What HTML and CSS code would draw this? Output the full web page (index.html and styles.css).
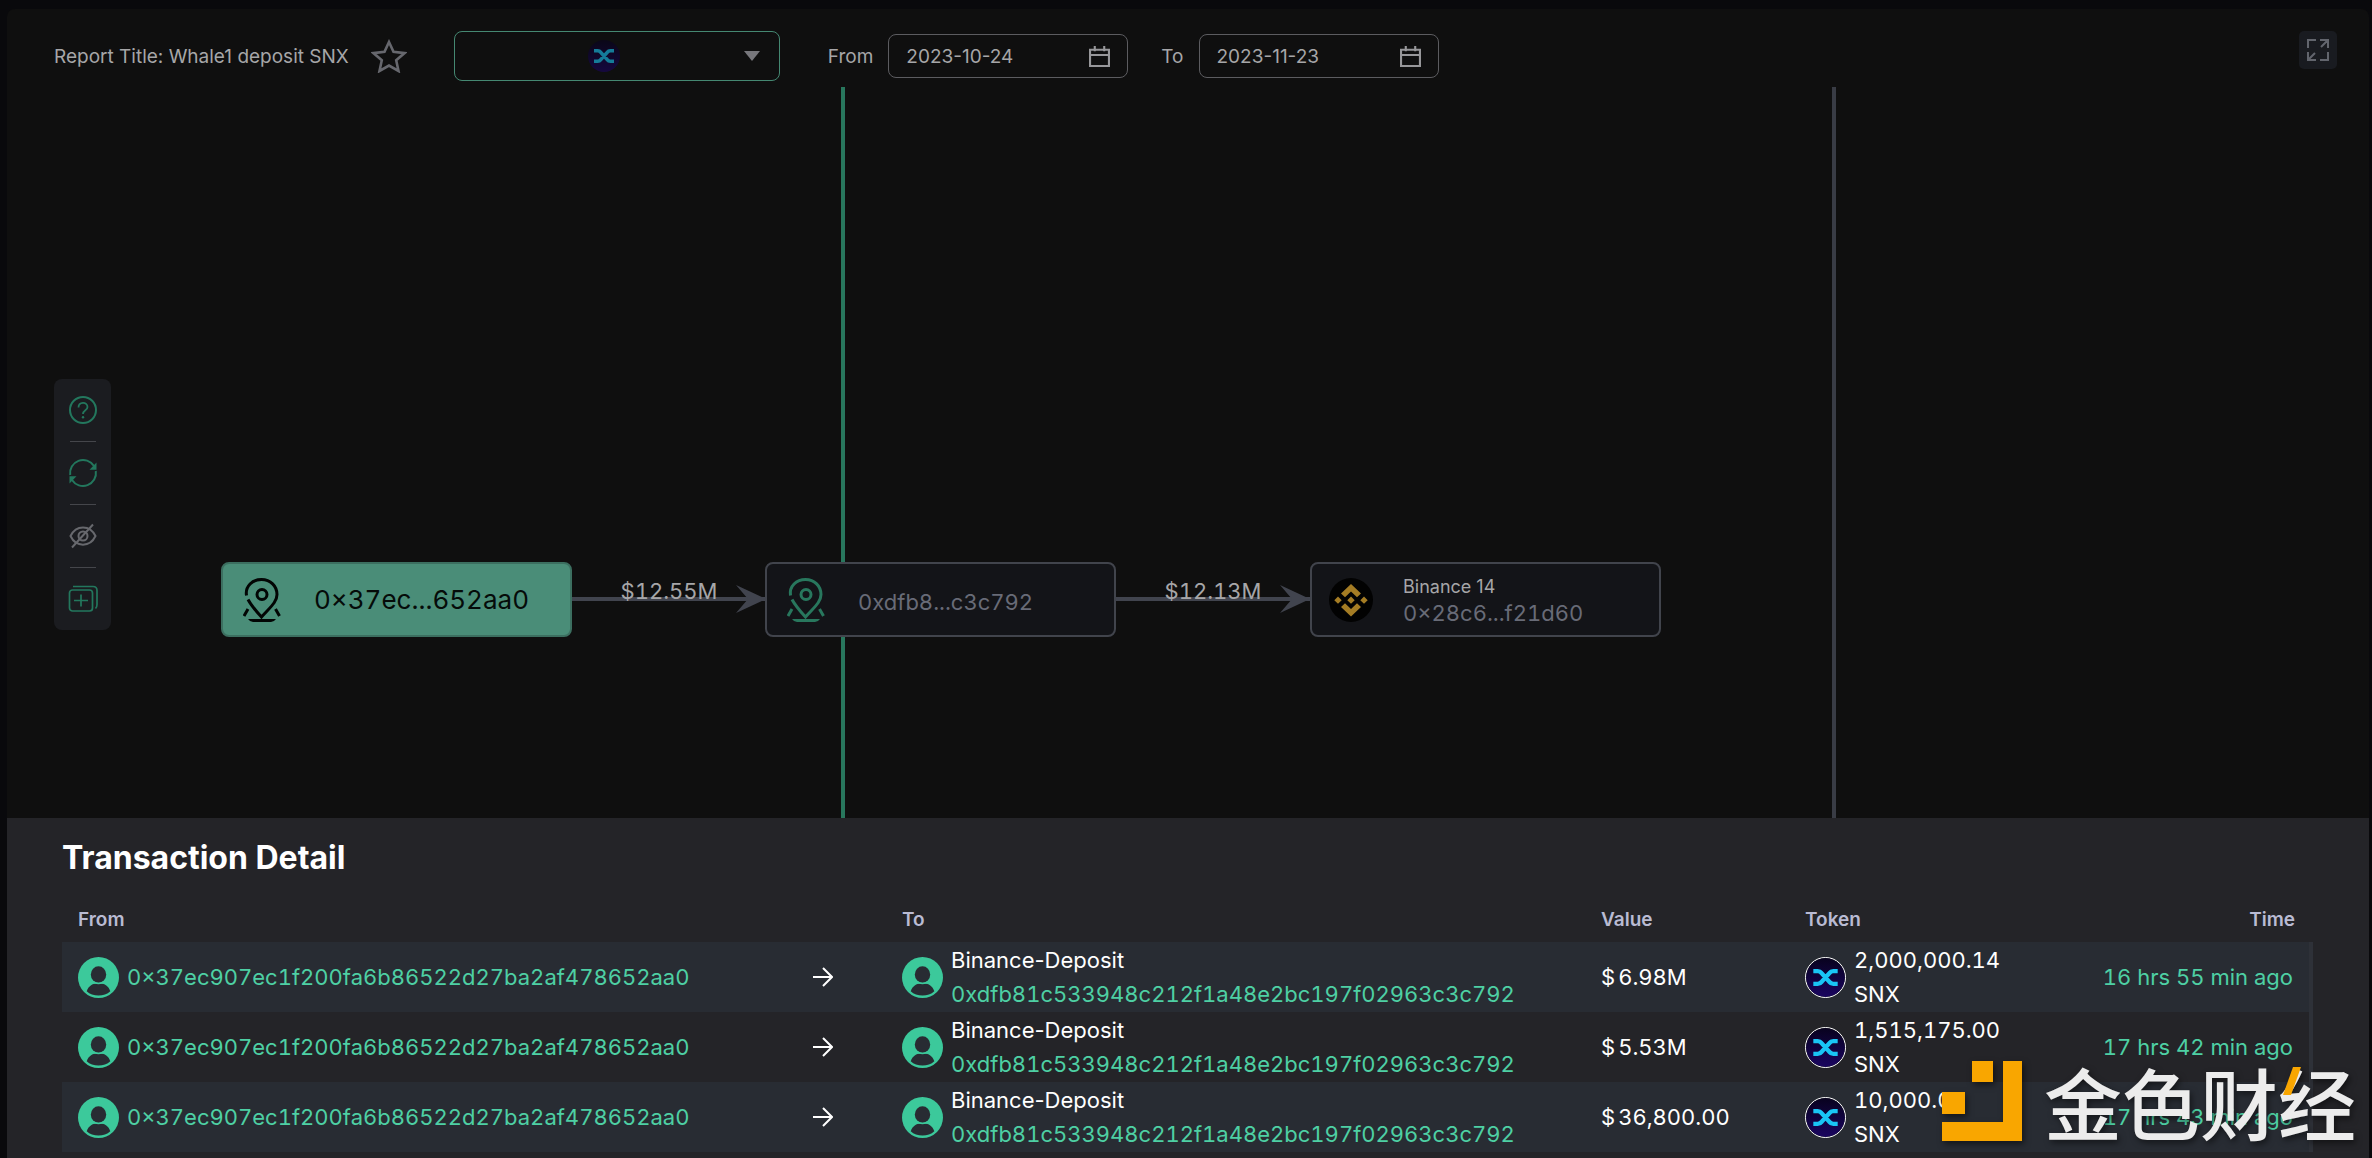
FILE: index.html
```html
<!DOCTYPE html>
<html lang="en">
<head>
<meta charset="utf-8">
<meta name="viewport" content="width=device-width, initial-scale=1">
<title>Whale1 deposit SNX</title>
<link rel="stylesheet" href="styles.css">
</head>
<body>
<svg class="defs" aria-hidden="true">
  <defs>
    <linearGradient id="snx-bg" x1="0" y1="0" x2="0" y2="1">
      <stop offset="0" stop-color="#08021e"/><stop offset="1" stop-color="#1a0560"/>
    </linearGradient>
    <symbol id="snx" viewBox="0 0 40 40">
      <circle cx="20" cy="20" r="20" fill="url(#snx-bg)"/>
      <path d="M7.500 13.500h4.500q2.500 0 4 2l8 9q1.500 2 4 2h4.500M32.500 13.500h-4.500q-2.500 0-4 2l-8 9q-1.500 2-4 2H7.500" fill="none" stroke="currentColor" stroke-width="4.500"/>
    </symbol>
    <symbol id="user" viewBox="0 0 40 40">
      <circle cx="20" cy="20" r="20" fill="#3cc99b"/>
      <ellipse cx="20" cy="17" rx="7.500" ry="8" fill="#282c33"/>
      <path d="M8.500 33.500C10 28 14.500 25.500 20 25.500S30 28 31.500 33.500C28.500 36.500 24.500 37.500 20 37.500S11.500 36.500 8.500 33.500Z" fill="#282c33"/>
      <path d="M13 24.500q7 2.600 14 0" fill="none" stroke="#3cc99b" stroke-width="1.500"/>
    </symbol>
    <symbol id="arrow" viewBox="0 0 20 20">
      <path d="M0 10h19M10 1l9 9-9 9" fill="none" stroke="currentColor" stroke-width="2"/>
    </symbol>
    <symbol id="calendar" viewBox="0 0 20 20">
      <path d="M1 3.500h18V19H1ZM1 8.500h18M5.500 0v5M14.500 0v5" fill="none" stroke="currentColor" stroke-width="2"/>
    </symbol>
    <symbol id="pin" viewBox="0 0 38 44">
      <g fill="none" stroke="currentColor" stroke-width="3">
        <path d="M3.500 17.500C2 8 9.500 1.500 18.500 1.500S34 8 34 16.500C34 24 27.500 29 18.500 39C12.500 32.500 8 27 5 21.500"/>
        <circle cx="19" cy="16.500" r="5"/>
        <path d="M5 31l-4 7M32.500 31l4 7"/>
      </g>
      <path d="M5 41h28q-2 3-5 3H10q-3 0-5-3Z" fill="currentColor"/>
    </symbol>
  </defs>
</svg>

<main class="report">
  <header class="toolbar">
    <h1 class="report-title">Report Title: Whale1 deposit SNX</h1>
    <button class="icon-button star" aria-label="Add to favourites">
      <svg viewBox="0 0 36 34"><path d="M18 3l4.500 9.800 11 1.300-8.300 7.200 2.300 10.700L18 26.500 8.500 32l2.300-10.700L2.500 14.100l11-1.300Z" fill="none" stroke="currentColor" stroke-width="2.600"/></svg>
    </button>
    <div class="token-select">
      <select aria-label="Token"><option>SNX</option></select>
      <svg class="token-icon" aria-hidden="true"><use href="#snx"/></svg>
      <svg class="caret" viewBox="0 0 16 10" aria-hidden="true"><path d="M0 0h16L8 10Z" fill="currentColor"/></svg>
    </div>
    <div class="date-field from">
      <label for="date-from">From</label>
      <div class="date-box"><input id="date-from" type="text" value="2023-10-24"><svg aria-hidden="true"><use href="#calendar"/></svg></div>
    </div>
    <div class="date-field to">
      <label for="date-to">To</label>
      <div class="date-box"><input id="date-to" type="text" value="2023-11-23"><svg aria-hidden="true"><use href="#calendar"/></svg></div>
    </div>
    <button class="icon-button expand" aria-label="Full screen">
      <svg viewBox="0 0 22 22"><path d="M1 9V1h8M13 1h8v8M21 1l-7 7M21 13v8h-8M9 21H1v-8M1 21l7-7" fill="none" stroke="currentColor" stroke-width="2"/></svg>
    </button>
  </header>

  <section class="canvas" aria-label="Fund flow">
    <div class="guide guide-active"></div>
    <div class="guide guide-idle"></div>

    <nav class="tools" aria-label="Canvas tools">
      <button class="icon-button" aria-label="Help">
        <svg viewBox="0 0 30 30" fill="none" stroke="currentColor"><circle cx="15" cy="15" r="13" stroke-width="2"/><path d="M10.500 12.500C10.500 6.500 19.500 6.500 19.500 12C19.500 15.500 15 15 15 19" stroke-width="1.800"/><circle cx="15" cy="22.300" r="1.200" fill="currentColor" stroke="none"/></svg>
      </button>
      <hr>
      <button class="icon-button" aria-label="Refresh">
        <svg viewBox="0 0 30 30" fill="none" stroke="currentColor" stroke-width="2"><path d="M2.200 17A13 13 0 0 1 26 8M27.800 13A13 13 0 0 1 4 22"/><path d="M28.500 4.500v7.200h-7Z M1.500 25.500v-7.200h7Z" fill="currentColor" stroke="none"/></svg>
      </button>
      <hr>
      <button class="icon-button muted" aria-label="Hide">
        <svg viewBox="0 0 30 30" fill="none" stroke="currentColor" stroke-width="2"><path d="M2.500 15C8 3.500 22 3.500 27.500 15C22 26.500 8 26.500 2.500 15ZM4 26.500L25 3.500"/><circle cx="15" cy="15" r="4.500"/></svg>
      </button>
      <hr>
      <button class="icon-button" aria-label="Add layer">
        <svg viewBox="0 0 30 30" fill="none" stroke="currentColor" stroke-width="1.700"><rect x="1.500" y="6" width="23" height="21" rx="3"/><path d="M13 10.500v12M6 16.500h14M5 2.500h20q4 0 4 4v14q0 2.500-1.500 4"/></svg>
      </button>
    </nav>

    <div class="edge edge-1"><span>$12.55M</span><svg viewBox="0 0 30 28"><path d="M0 0l30 14L0 28l12-14Z" fill="currentColor"/></svg></div>
    <div class="edge edge-2"><span>$12.13M</span><svg viewBox="0 0 30 28"><path d="M0 0l30 14L0 28l12-14Z" fill="currentColor"/></svg></div>

    <article class="node node-source">
      <svg class="pin" aria-hidden="true"><use href="#pin"/></svg>
      <p class="node-address">0×37ec...652aa0</p>
    </article>
    <article class="node node-deposit">
      <svg class="pin" aria-hidden="true"><use href="#pin"/></svg>
      <p class="node-address">0xdfb8...c3c792</p>
    </article>
    <article class="node node-exchange">
      <svg class="exchange-logo" viewBox="0 0 44 44" aria-hidden="true">
        <circle cx="22" cy="22" r="22" fill="#020202"/>
        <path d="M22 6l10 9.500-4 3.700-6-5.700-6 5.700-4-3.700ZM22 38.500l10-9.500-4-3.700-6 5.700-6-5.700-4 3.700ZM22 18.600l3.700 3.600-3.700 3.600-3.700-3.600ZM9 18.600l3.700 3.600L9 25.800l-3.700-3.600ZM35 18.600l3.700 3.600-3.700 3.600-3.700-3.600Z" fill="#a47c24"/>
      </svg>
      <div class="node-text">
        <h2 class="node-name">Binance 14</h2>
        <p class="node-address">0×28c6...f21d60</p>
      </div>
    </article>
  </section>

  <section class="detail">
    <h2 class="detail-title">Transaction Detail</h2>
    <div class="table-frame">
      <table>
        <colgroup><col class="col-from"><col class="col-arrow"><col><col class="col-value"><col class="col-token"><col class="col-time"></colgroup>
        <thead>
          <tr><th>From</th><th></th><th>To</th><th>Value</th><th>Token</th><th class="time">Time</th></tr>
        </thead>
        <tbody>
          <tr>
            <td><div class="party"><svg><use href="#user"/></svg><a href="#from-1">0×37ec907ec1f200fa6b86522d27ba2af478652aa0</a></div></td>
            <td><svg class="arrow"><use href="#arrow"/></svg></td>
            <td><div class="party"><svg><use href="#user"/></svg><div class="stack"><span class="label">Binance-Deposit</span><a href="#to-1">0xdfb81c533948c212f1a48e2bc197f02963c3c792</a></div></div></td>
            <td><div class="money"><span>$</span><span>6.98M</span></div></td>
            <td><div class="party token"><svg><use href="#snx"/></svg><div class="stack"><span>2,000,000.14</span><span>SNX</span></div></div></td>
            <td class="time"><a href="#tx-1">16 hrs 55 min ago</a></td>
          </tr>
          <tr>
            <td><div class="party"><svg><use href="#user"/></svg><a href="#from-2">0×37ec907ec1f200fa6b86522d27ba2af478652aa0</a></div></td>
            <td><svg class="arrow"><use href="#arrow"/></svg></td>
            <td><div class="party"><svg><use href="#user"/></svg><div class="stack"><span class="label">Binance-Deposit</span><a href="#to-2">0xdfb81c533948c212f1a48e2bc197f02963c3c792</a></div></div></td>
            <td><div class="money"><span>$</span><span>5.53M</span></div></td>
            <td><div class="party token"><svg><use href="#snx"/></svg><div class="stack"><span>1,515,175.00</span><span>SNX</span></div></div></td>
            <td class="time"><a href="#tx-2">17 hrs 42 min ago</a></td>
          </tr>
          <tr>
            <td><div class="party"><svg><use href="#user"/></svg><a href="#from-3">0×37ec907ec1f200fa6b86522d27ba2af478652aa0</a></div></td>
            <td><svg class="arrow"><use href="#arrow"/></svg></td>
            <td><div class="party"><svg><use href="#user"/></svg><div class="stack"><span class="label">Binance-Deposit</span><a href="#to-3">0xdfb81c533948c212f1a48e2bc197f02963c3c792</a></div></div></td>
            <td><div class="money"><span>$</span><span>36,800.00</span></div></td>
            <td><div class="party token"><svg><use href="#snx"/></svg><div class="stack"><span>10,000.00</span><span>SNX</span></div></div></td>
            <td class="time"><a href="#tx-3">17 hrs 43 min ago</a></td>
          </tr>
        </tbody>
      </table>
    </div>
  </section>
</main>

<aside class="watermark" lang="zh-CN">
  <svg class="mark" viewBox="0 0 80 80" aria-hidden="true"><path d="M61 0h19v80H0V61h61ZM30 0h21v21H30ZM0 31h23v22H0Z" fill="#f9a600"/></svg>
  <span>金色财经</span>
  <svg class="slash" viewBox="0 0 18 28" aria-hidden="true"><path d="M10 0h8L8 28H0Z" fill="#f9a600"/></svg>
</aside>
</body>
</html>
```
FILE: styles.css
```css
* { box-sizing: border-box; }

body {
  margin: 0;
  background: #09090c;
  color: #a6a6a8;
  font-family: Inter, "Liberation Sans", sans-serif;
  font-size: 22px;
  overflow: hidden;
}

h1, h2, p { margin: 0; font-weight: 400; }
a { color: #4ed0a4; text-decoration: none; }
svg { display: block; flex: none; }
.defs { position: absolute; width: 0; height: 0; }

.icon-button {
  display: flex;
  align-items: center;
  justify-content: center;
  padding: 0;
  border: 0;
  background: none;
  color: inherit;
}

.report {
  display: flex;
  flex-direction: column;
  min-height: 100vh;
  padding: 9px 3px 0 7px;
}

/* Toolbar */
.toolbar {
  display: flex;
  align-items: center;
  height: 78px;
  padding: 16px 32px 0 47px;
  background: #0f0f0f;
  border-radius: 8px 8px 0 0;
  font-size: 19px;
}
.toolbar > * { flex: none; }
.report-title { font-size: 19px; }
.star { margin-left: 22px; color: #66676d; }
.star svg { width: 36px; height: 34px; }
.token-select {
  position: relative;
  width: 326px;
  height: 50px;
  margin-left: 47px;
}
.token-select select {
  width: 100%;
  height: 100%;
  appearance: none;
  border: 1px solid #458872;
  border-radius: 8px;
  background: none;
  color: transparent;
}
.token-icon {
  position: absolute;
  left: 134px;
  top: 9px;
  width: 32px;
  height: 32px;
  color: #19c5f5;
  opacity: 0.6;
}
.caret {
  position: absolute;
  right: 20px;
  top: 20px;
  width: 16px;
  height: 10px;
  color: #77777c;
}
.date-field { display: flex; align-items: center; gap: 15px; }
.date-field.from { margin-left: 48px; }
.date-field.to { margin-left: 33px; }
.date-box {
  display: flex;
  align-items: center;
  width: 240px;
  height: 44px;
  padding: 0 17px;
  border: 1px solid #5c5c60;
  border-radius: 8px;
}
.date-box input {
  flex: 1;
  min-width: 0;
  padding: 0;
  border: 0;
  background: none;
  color: #a6a6a8;
  font: inherit;
}
.date-box svg { width: 21px; height: 21px; color: #97979a; }
.expand {
  width: 38px;
  height: 38px;
  margin: 0 0 12px auto;
  border-radius: 5px;
  background: #191b20;
  color: #62656d;
}
.expand svg { width: 22px; height: 22px; }

/* Flow canvas */
.canvas {
  position: relative;
  flex: 1 0 auto;
  min-height: 600px;
  background: #0f0f0f;
}
.guide { position: absolute; top: 0; bottom: 0; width: 4px; }
.guide-active { left: 834px; background: #28775d; }
.guide-idle { left: 1825px; background: #393c45; }

.tools {
  position: absolute;
  left: 47px;
  top: 292px;
  width: 57px;
  padding: 16px 0;
  border-radius: 8px;
  background: #1b1c20;
  color: #23775d;
}
.tools .icon-button { width: 100%; height: 30px; }
.tools .icon-button svg { width: 30px; height: 30px; }
.tools .muted { color: #67686d; }
.tools hr {
  width: 26px;
  height: 1px;
  margin: 16px auto;
  border: 0;
  background: #45464b;
}

.node {
  position: absolute;
  top: 475px;
  display: flex;
  align-items: center;
  width: 351px;
  height: 75px;
  padding: 0 20px;
  border: 2px solid #41444c;
  border-radius: 8px;
  background: #131418;
  color: #686b77;
}
.node-source { left: 214px; background: #4a8d78; border-color: #3c6f60; color: #050b09; }
.node-deposit { left: 758px; }
.node-exchange { left: 1303px; padding: 0 17px; }
.pin { width: 38px; height: 44px; color: #28775d; }
.node-source .pin { color: #020504; }
.node .node-address { line-height: 26px; font-variant-numeric: tabular-nums; }
.node-source .node-address { margin-left: 33px; font-size: 26px; }
.node-deposit .node-address { margin: 4px 0 0 33px; font-size: 22px; }
.exchange-logo { width: 44px; height: 44px; }
.node-text { margin-left: 30px; }
.node-name { color: #a6a6a8; font-size: 18px; line-height: 26px; }

.edge {
  position: absolute;
  top: 510px;
  width: 194px;
  height: 4px;
  background: #41444e;
  color: #41444e;
}
.edge-1 { left: 565px; }
.edge-2 { left: 1109px; }
.edge span {
  position: absolute;
  bottom: 0;
  left: 0;
  width: 100%;
  color: #a6a6a8;
  line-height: 20px;
  font-variant-numeric: tabular-nums;
  text-align: center;
}
.edge svg { position: absolute; right: 0; top: -12px; width: 30px; height: 28px; }

/* Transactions */
.detail {
  padding: 20px 56px 6px 55px;
  background: #242428;
  color: #fff;
}
.detail-title { font-size: 32px; font-weight: 700; line-height: 40px; }
.table-frame { margin-top: 22px; }
table {
  width: 100%;
  border-collapse: collapse;
  table-layout: fixed;
  font-variant-numeric: tabular-nums;
}
.col-from { width: 735px; }
.col-arrow { width: 89px; }
.col-value { width: 204px; }
.col-token { width: 260px; }
.col-time { width: 262px; }
th {
  height: 42px;
  padding: 0 16px 4px;
  color: #b9bbd3;
  font-size: 19px;
  font-weight: 600;
  text-align: left;
}
td { height: 70px; padding: 0 16px; line-height: 34px; white-space: nowrap; }
tbody tr:nth-child(odd) { background: #282c33; }
tbody { border-right: 4px solid #2e3138; }
.party { display: flex; align-items: center; gap: 8px; }
.party svg { width: 41px; height: 41px; }
.token svg { border: 1px solid #fff; border-radius: 50%; color: #19c5f5; }
.stack { display: flex; flex-direction: column; }
.label { font-variant-numeric: normal; }
.money { display: flex; gap: 3px; }
.arrow { width: 20px; height: 20px; }
th.time, td.time { padding-right: 16px; text-align: right; }

/* Site watermark */
.watermark {
  position: absolute;
  right: 16px;
  bottom: 17px;
  display: flex;
  align-items: center;
  gap: 22px;
  color: #ececec;
  font-family: "Noto Sans CJK SC", sans-serif;
  font-size: 78px;
  font-weight: 500;
  line-height: 80px;
  filter: drop-shadow(2px 3px 3px rgba(0, 0, 0, 0.5));
}
.mark { width: 80px; height: 80px; }
.slash { position: absolute; right: 55px; top: 6px; width: 18px; height: 28px; }
```
